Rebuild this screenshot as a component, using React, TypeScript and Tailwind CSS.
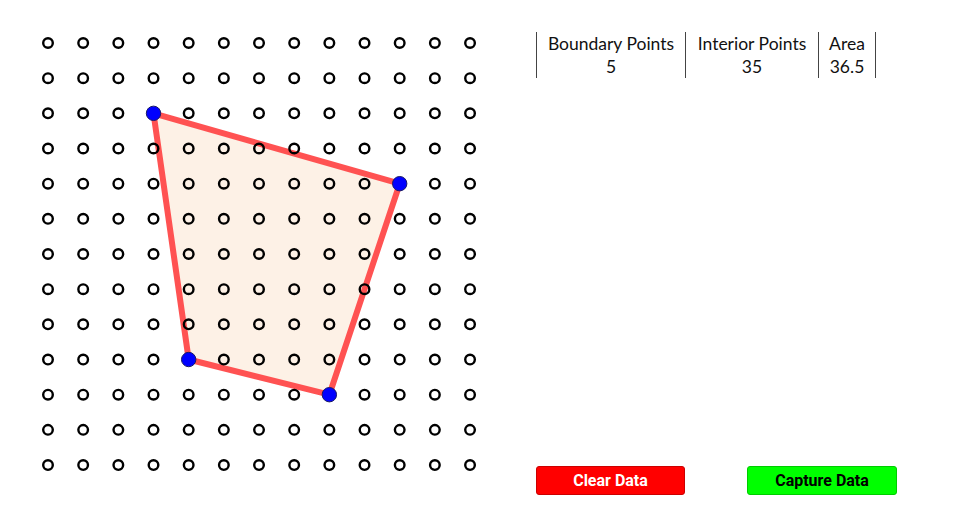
import React from 'react';

const N = 13;
const X0 = 48;
const Y0 = 43;
const STEP = 35.17;

const px = (i: number) => X0 + i * STEP;
const py = (j: number) => Y0 + j * STEP;

// vertices of the polygon as [col, row]
const vertices: [number, number][] = [
  [3, 2],
  [10, 4],
  [8, 10],
  [4, 9],
];

function GeoBoard() {
  const pts = vertices.map(([c, r]) => `${px(c)},${py(r)}`).join(' ');
  const dots: React.ReactNode[] = [];
  for (let r = 0; r < N; r++) {
    for (let c = 0; c < N; c++) {
      dots.push(
        <circle key={`${c}-${r}`} cx={px(c)} cy={py(r)} r={4.8} fill="none" stroke="#000" strokeWidth={2.4} />
      );
    }
  }

  return (
    <svg width={536} height={525} viewBox="0 0 536 525" className="shrink-0 block">
      <polygon points={pts} fill="#fdf1e6" stroke="#ff5252" strokeWidth={6} strokeLinejoin="round" />
      {dots}
      {vertices.map(([c, r]) => (
        <circle key={`v${c}${r}`} cx={px(c)} cy={py(r)} r={7.2} fill="#0000ff" stroke="#1a1a66" strokeWidth={1} />
      ))}
    </svg>
  );
}

export default function App() {
  return (
    <div className="w-[955px] h-[525px] bg-white flex overflow-hidden">
      <GeoBoard />

      <div className="flex-1 flex flex-col pt-[32px] pb-[30px]">
        {/* data table */}
        <div
          className="flex text-[17.5px] text-[#111] leading-[23px]"
          style={{ fontFamily: 'Lato, "DejaVu Sans", sans-serif' }}
        >
          <div className="w-[150px] border-l border-r border-[#444] flex flex-col items-center">
            <span>Boundary Points</span>
            <span>5</span>
          </div>
          <div className="w-[133px] border-r border-[#444] flex flex-col items-center">
            <span>Interior Points</span>
            <span>35</span>
          </div>
          <div className="w-[57px] border-r border-[#444] flex flex-col items-center">
            <span>Area</span>
            <span>36.5</span>
          </div>
        </div>

        <div className="flex-1" />

        {/* buttons */}
        <div className="flex gap-[62px]" style={{ fontFamily: 'Roboto, "Liberation Sans", sans-serif' }}>
          <button className="w-[149px] h-[29px] bg-[#ff0000] border border-[#cc0000] rounded-[3px] text-white text-[16px] font-bold">
            Clear Data
          </button>
          <button className="w-[150px] h-[29px] bg-[#00ff00] border border-[#00cc00] rounded-[3px] text-black text-[16px] font-bold">
            Capture Data
          </button>
        </div>
      </div>
    </div>
  );
}
